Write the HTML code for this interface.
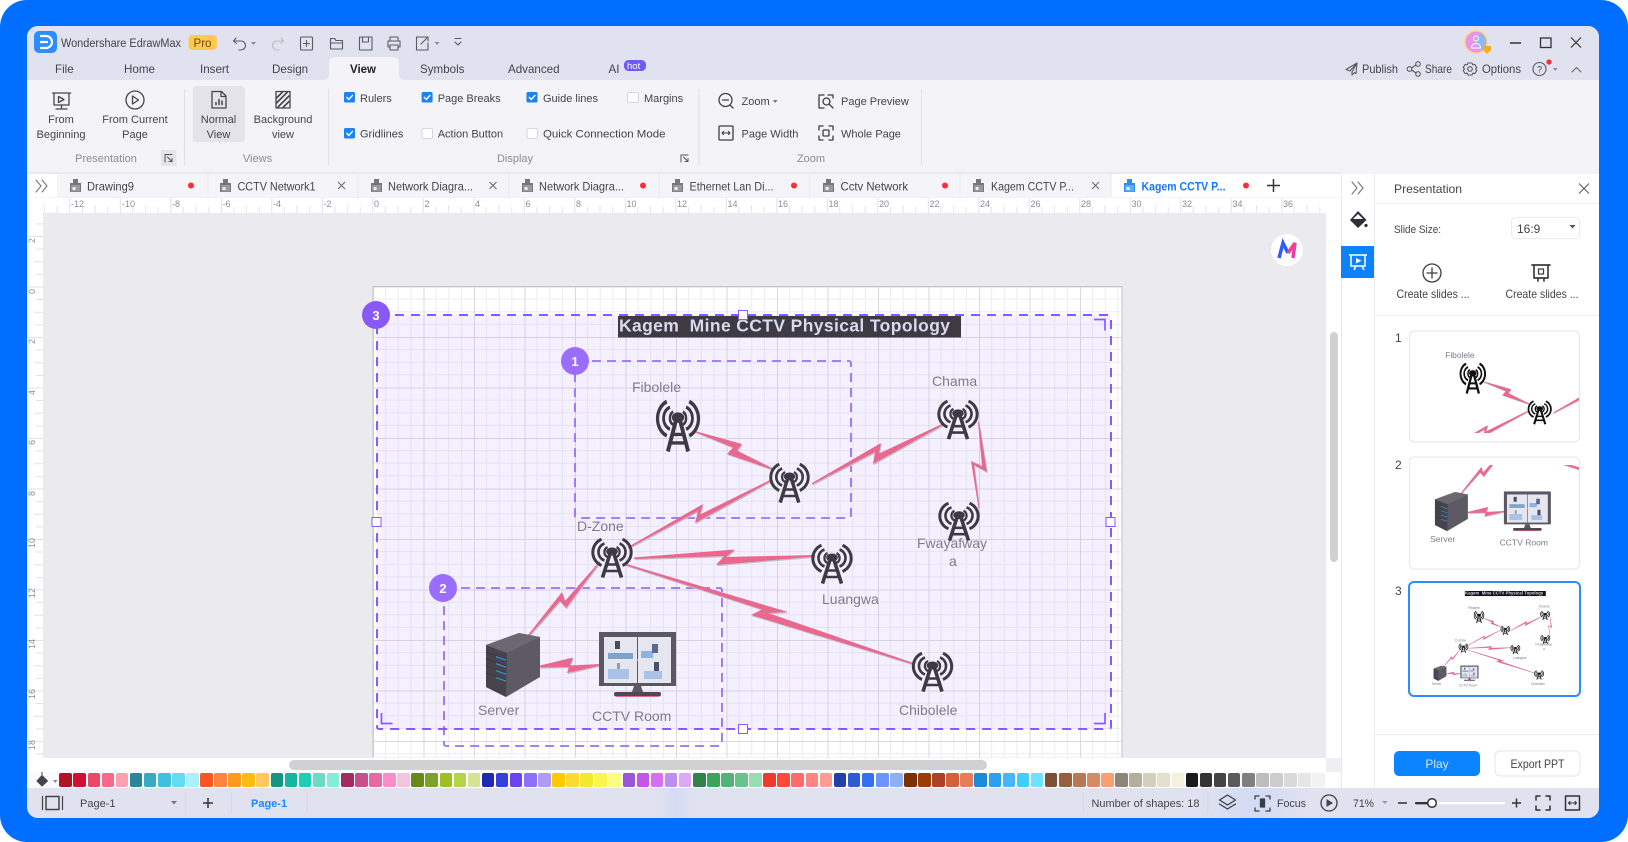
<!DOCTYPE html>
<html lang="en"><head><meta charset="utf-8"><title>Wondershare EdrawMax</title>
<style>
html,body{margin:0;padding:0;width:1628px;height:842px;overflow:hidden;background:#fff}
svg{position:absolute;left:0;top:0;display:block}
text{font-family:"Liberation Sans",sans-serif;font-size:11px;fill:#43434b}
.g{fill:#8b8b92}.l{font-size:14px;fill:#7f7b88}.r{font-size:9px;fill:#8d8d92}
.m{font-size:11.6px}.tb{font-size:12px}
.i{fill:none;stroke:#45454d;stroke-width:1.3;stroke-linecap:round;stroke-linejoin:round}
.t{fill:none;stroke:#5a5a62;stroke-width:1.1;stroke-linecap:round;stroke-linejoin:round}
.sw{position:absolute;left:59.4px;top:773px;display:flex}
.sw i{display:block;width:12.6px;height:14px;margin-right:1.49px;border-radius:2px}
</style></head><body>
<svg width="1628" height="842" viewBox="0 0 1628 842" xmlns="http://www.w3.org/2000/svg">
<defs>
<clipPath id="win"><rect x="27" y="26" width="1572" height="792" rx="11"/></clipPath>
<clipPath id="pg"><rect x="43" y="213" width="1283" height="544.5"/></clipPath>
<clipPath id="c1"><rect x="1410" y="332" width="169" height="101"/></clipPath>
<clipPath id="c2"><rect x="1410" y="465" width="169" height="103"/></clipPath>
<linearGradient id="gl" x1="0" x2="1" y1="0" y2="0"><stop offset="0" stop-color="#cfdaf6" stop-opacity="0"/><stop offset=".5" stop-color="#cfdaf6"/><stop offset="1" stop-color="#cfdaf6" stop-opacity="0"/></linearGradient>
<pattern id="gr" patternUnits="userSpaceOnUse" x="373" y="286.5" width="50.5" height="50.5">
<path d="M12.6 0V50.5M25.25 0V50.5M37.9 0V50.5M0 12.6H50.5M0 25.25H50.5M0 37.9H50.5" stroke="#cfcdd9" stroke-opacity=".38" stroke-width="1" fill="none"/>
<path d="M.5 0V50.5M0 .5H50.5" stroke="#c2c0cc" stroke-opacity=".6" stroke-width="1" fill="none"/>
</pattern>
<pattern id="rt" patternUnits="userSpaceOnUse" x="69.3" y="198" width="50.5" height="15">
<path d="M.5 0V15M13 9V15M25.7 7V15M38.4 9V15" stroke="#e2e2e6" fill="none"/>
</pattern>
<pattern id="rl" patternUnits="userSpaceOnUse" x="27" y="286.5" width="16" height="50.5">
<path d="M0 .5H16M9 13H16M7 25.7H16M9 38.4H16" stroke="#e2e2e6" fill="none"/>
</pattern>
<symbol id="tw" viewBox="0 0 44 40" preserveAspectRatio="none">
<g fill="none" stroke="currentColor" stroke-linecap="butt">
<path stroke-width="3" d="M11.5 1.2A14.3 14.3 0 0 0 11.5 27.5M32.5 1.2A14.3 14.3 0 0 1 32.5 27.5"/>
<path stroke-width="2.6" d="M14.500 5.500A9 9 0 0 0 14.500 22.500M29.500 5.500A9 9 0 0 1 29.500 22.500"/>
<path stroke-width="2.3" d="M17.500 9A5.600 5.600 0 0 0 17.500 19M26.500 9A5.600 5.600 0 0 1 26.500 19"/>
<path stroke-width="3.600" d="M20.300 15L12.500 39.600M23.700 15L31.500 39.600"/>
<path stroke-width="2.600" d="M17 26.500H27M15 33H29"/>
</g><ellipse cx="22" cy="13.500" rx="5.800" ry="4" fill="currentColor"/>
</symbol>
<symbol id="ti" viewBox="0 0 11 13"><path d="M3 0h5v4h3v9H0V4h3z" fill="#777"/><rect x="1" y="6" width="9" height="6.500" fill="#999"/><rect x="2.600" y="8" width="3" height="3" fill="#eee"/></symbol>
<symbol id="tia" viewBox="0 0 11 13"><path d="M3 0h5v4h3v9H0V4h3z" fill="#2f8cf0"/><rect x="1" y="6" width="9" height="6.500" fill="#5aaeff"/><rect x="2.600" y="8" width="3" height="3" fill="#e8f3ff"/></symbol>
<g id="bolts">
<polygon points="695,431 742,444 737,450.500 772,468 772,469.500 727,454 733,447.500 695,432"/>
<polygon points="628,547 703,504 700,514.500 772,479 772,480.500 695,523 698,511 628,548.500"/>
<polygon points="812,483 881,443 879,453.500 943,423.500 943,425 873,464 875,452 812,484.500"/>
<polygon points="979,422 987,472 974,465 979.500,508 978.500,508 971,461 982,466 978,422"/>
<polygon points="634,557.500 735,549.500 726,557 815,555 815,556.500 716,565 724,556 634,559"/>
<polygon points="625,563.500 788,612 768,613 912,662.500 912,664 751,615 762,609.500 625,565"/>
<polygon points="528,635 562,592 565,601 600,561 600,562.500 566,608 560,601 529,636"/>
<polygon points="540,665.500 573,657.500 570,665.500 600,664 600,665.500 567,673 569,667 540,667.500"/>
</g>
<g id="d">
<use href="#bolts" transform="translate(.8 1.2)" fill="#c6c2cd"/>
<use href="#bolts" fill="#e9688f"/>
<use href="#tw" x="654.500" y="400" width="47" height="52"/>
<use href="#tw" x="768" y="463" width="43" height="40"/>
<use href="#tw" x="936" y="400" width="44" height="39.500"/>
<use href="#tw" x="937" y="502" width="44" height="39"/>
<use href="#tw" x="590" y="538" width="44" height="40"/>
<use href="#tw" x="810" y="544" width="44" height="40"/>
<use href="#tw" x="910.500" y="652" width="44" height="40"/>
<polygon points="519,633 540,637 540,677 506,697 486,687 486,645" fill="#5e5a64"/>
<polygon points="486,645 507,653 506,697 486,687" fill="#46434c"/>
<polygon points="519,633 540,637 507,653 486,645" fill="#6c6872"/>
<g stroke="#2d9be0" stroke-width="1.400"><path d="M496 656.500L506 660M496 663.500L506 667M496 670.500L506 674M496 677.500L506 681"/></g>
<g stroke="#38343d" stroke-width=".7"><path d="M486 652L506 659M486 659L506 666M486 666L506 673M486 673L506 680"/></g>
<rect x="599" y="632" width="77" height="54" fill="#5b5862"/>
<rect x="604" y="637" width="67" height="46" fill="#e6e6f0"/>
<path d="M637.500 637V683" stroke="#5b5862" stroke-width="1"/>
<path d="M604 660H671" stroke="#e6e6f0"/>
<rect x="608" y="653" width="25" height="6" fill="#7fa3c9"/><rect x="615" y="641" width="5" height="8" fill="#4a4a58"/><rect x="641" y="651" width="12" height="7" fill="#8fb3e0"/><rect x="652" y="644" width="6" height="9" fill="#5b6a8c"/>
<rect x="608" y="669" width="21" height="10" fill="#a8c3e6"/><rect x="617" y="663" width="3" height="6" fill="#9a9aa6"/><rect x="644" y="671" width="18" height="8" fill="#a8c3e6"/><rect x="654" y="662" width="5" height="9" fill="#4a5068"/>
<path d="M634 686h7l2 6h-11z" fill="#5b5862"/><rect x="614" y="692" width="47" height="4.400" rx="2" fill="#4c4952"/><rect x="616" y="696" width="43" height="1" fill="#e9688f"/>
<text class="l" x="632" y="392">Fibolele</text>
<text class="l" x="932" y="386">Chama</text>
<text class="l" x="577" y="531">D-Zone</text>
<text class="l" x="917" y="548">Fwayafway</text>
<text class="l" x="949" y="566">a</text>
<text class="l" x="822" y="604">Luangwa</text>
<text class="l" x="899" y="715">Chibolele</text>
<text class="l" x="478" y="715">Server</text>
<text class="l" x="592" y="721">CCTV Room</text>
</g>
<g id="t"><rect x="618" y="316" width="343" height="21.500" fill="currentColor"/><text x="619" y="331.700" textLength="331" style="font-size:17.500px;font-weight:700;fill:#d8daee">Kagem&#160; Mine CCTV Physical Topology</text></g>
</defs>

<rect width="1628" height="842" fill="#fff"/>
<rect width="1628" height="842" rx="27" fill="#006eff"/>
<g clip-path="url(#win)">
<rect x="27" y="26" width="1572" height="792" fill="#f3f3f8"/>
<rect x="27" y="26" width="1572" height="54" fill="#e1e2ef"/>

<!-- title row -->
<rect x="34" y="31" width="23" height="22" rx="5" fill="#2b8dff"/>
<path d="M40 36h6a6 6 0 0 1 0 12h-6M40 42h8" fill="none" stroke="#fff" stroke-width="2.200"/>
<text x="61" y="47" style="font-size:11.500px" textLength="120" lengthAdjust="spacingAndGlyphs">Wondershare EdrawMax</text>
<rect x="188.500" y="35" width="28.500" height="15" rx="4" fill="#ffc94f"/>
<text x="193.500" y="47" style="font-size:12px;fill:#6a4d0a" textLength="18" lengthAdjust="spacingAndGlyphs">Pro</text>
<path class="t" d="M236 38l-2.500 3 3 2.500M234 41h7a4.500 4.500 0 0 1 0 9h-2"/>
<path d="M251 42h5l-2.500 3z" fill="#8a8a92"/>
<path class="t" style="stroke:#b9b9c1" d="M281 38l2.500 3-3 2.500M283 41h-6a4.500 4.500 0 0 0 0 9h2"/>
<rect class="t" x="300.500" y="37" width="12" height="13" rx="1"/><path class="t" d="M306.500 40.500v6M303.500 43.500h6"/>
<path class="t" d="M330.500 49V38.500h4l1.500 2h6.500V49zM330.500 43h12"/>
<path class="t" d="M359.500 37h12.500v13h-12.500zM362.500 37v5h6v-5"/>
<path class="t" d="M390 41v-4h8v4M388 41h12v6h-2M388 47h2M388 41v6M390 45h8v5h-8z"/>
<path class="t" d="M428 43v7h-11.500V37h7M421 44l7-7M424 37h4v4"/>
<path d="M434.500 42h5l-2.500 3z" fill="#8a8a92"/>
<path class="t" d="M455 38.500h6M455 42l3 3 3-3"/>

<!-- tabs -->
<path d="M323 80q5.500 0 6-5V63q0-6 6-6h58q6 0 6 6v12q.5 5 6 5z" fill="#f3f3f8"/>
<text class="m" x="55" y="73">File</text><text class="m" x="124" y="73">Home</text><text class="m" x="200" y="73">Insert</text><text class="m" x="272" y="73">Design</text>
<text class="m" x="350" y="73" style="font-weight:700;fill:#222" textLength="26" lengthAdjust="spacingAndGlyphs">View</text>
<text class="m" x="420" y="73">Symbols</text><text class="m" x="508" y="73">Advanced</text><text class="m" x="608.500" y="73">AI</text>
<rect x="624" y="60" width="22" height="11" rx="4.500" fill="#6c5cf5"/><text x="627" y="69" style="font-size:9.500px;fill:#fff">hot</text>

<!-- win controls -->
<circle cx="1476" cy="42" r="12" fill="#ffd98a"/><circle cx="1476" cy="42" r="10.500" fill="#e895e8"/><path d="M1476 42a10.500 10.500 0 0 1 5-9 10.500 10.500 0 0 1 0 18z" fill="#8fb8f5"/>
<circle cx="1476" cy="38.500" r="2.500" fill="none" stroke="#fff"/><path d="M1471.500 48c0-6 9-6 9 0z" fill="none" stroke="#fff"/>
<path d="M1483 46h8v4l-4 4-4-4z" fill="#f7ad1a"/>
<path d="M1510 43h11" stroke="#333" stroke-width="1.400"/>
<rect x="1540.500" y="38" width="10.500" height="9.500" fill="none" stroke="#333" stroke-width="1.300"/>
<path d="M1571 37.500l10 10M1581 37.500l-10 10" stroke="#333" stroke-width="1.200"/>
<path class="t" d="M1357 63l-11 6.500 4 1.500 7-8-5 9v3l2.500-2.500 1.500 1z"/><text x="1362" y="73" class="m" textLength="36" lengthAdjust="spacingAndGlyphs">Publish</text>
<g class="t"><circle cx="1418" cy="64" r="2.300"/><circle cx="1409.500" cy="69" r="2.300"/><circle cx="1418" cy="74" r="2.300"/><path d="M1411.500 68l4.500-3M1411.500 70l4.500 3"/></g><text x="1425" y="73" class="m" textLength="27" lengthAdjust="spacingAndGlyphs">Share</text>
<g class="t"><circle cx="1470" cy="69" r="2.300"/><path d="M1468 63h4l.8 1.800 2-.4 2 3-1.300 1.600 1.300 1.600-2 3-2-.4-.8 1.800h-4l-.8-1.800-2 .4-2-3 1.300-1.600-1.300-1.600 2-3 2 .4z"/></g><text x="1482" y="73" class="m" textLength="39" lengthAdjust="spacingAndGlyphs">Options</text>
<circle class="t" cx="1539.500" cy="69" r="6.500"/><text x="1537" y="72.500" style="font-size:9px">?</text><circle cx="1549" cy="62" r="2.600" fill="#ff2d2d"/><path d="M1553 68h4.500l-2.200 3z" fill="#8a8a92"/>
<path class="t" style="stroke:#666" d="M1572 72l4.500-4.500L1581 72"/>

<!-- ribbon -->
<g class="i">
<path d="M52.700 93h18M54 93v12h15V93M61.500 105v4M56 109h11"/><path d="M58.500 96.500l5.500 3-5.500 3z"/>
<circle cx="135" cy="100" r="9"/><path d="M132.500 96l6 4-6 4z"/>
</g>
<rect x="192.600" y="86" width="52.400" height="56" rx="4" fill="#e3e3e9"/>
<g class="i"><path d="M212 91.500h9.500l4.500 4.500v12h-14zM221 92v4.500h4.500"/><path d="M216 104.500v-2M219 104.500v-5M222 104.500v-3.500" stroke-width="1.500"/>
<rect x="276" y="91.500" width="14" height="16.500"/><path d="M276.500 98l6-6M276.500 103l11-11M278 107l11-11M283 107.500l6-6" stroke-width="1.700"/></g>
<g text-anchor="middle"><text x="61" y="123">From</text><text x="61" y="138">Beginning</text><text x="135" y="123">From Current</text><text x="135" y="138">Page</text><text x="218.500" y="123">Normal</text><text x="218.500" y="138">View</text><text x="283" y="123">Background</text><text x="283" y="138">view</text>
<text class="g" x="106" y="162">Presentation</text><text class="g" x="257.500" y="162">Views</text><text class="g" x="515" y="162">Display</text><text class="g" x="811" y="162">Zoom</text></g>
<rect x="161" y="150" width="15.500" height="16" rx="1" fill="#e4e4ea"/><path class="i" style="stroke-width:1;stroke:#555" d="M165 162v-7.500h7M167.500 157l4.500 4.500M172 158.500v3h-3"/>
<path class="i" style="stroke-width:1;stroke:#555" d="M681 162v-7h7M683.500 157l4.500 4.500M688 158.500v3h-3"/>
<path d="M184.500 89V165M328.700 89V165M699 89V165M921.500 89V165" stroke="#dfdfe5"/>
<g>
<rect x="344" y="92" width="11" height="10.500" rx="1.500" fill="#1c83f0"/><path d="M346.500 97l2.300 2.500 4-4.500" fill="none" stroke="#fff" stroke-width="1.400"/>
<rect x="344" y="128" width="11" height="10.500" rx="1.500" fill="#1c83f0"/><path d="M346.500 133l2.300 2.500 4-4.500" fill="none" stroke="#fff" stroke-width="1.400"/>
<rect x="421.600" y="92" width="11" height="10.500" rx="1.500" fill="#1c83f0"/><path d="M424 97l2.300 2.500 4-4.500" fill="none" stroke="#fff" stroke-width="1.400"/>
<rect x="526.500" y="92" width="11" height="10.500" rx="1.500" fill="#1c83f0"/><path d="M529 97l2.300 2.500 4-4.500" fill="none" stroke="#fff" stroke-width="1.400"/>
<rect x="627.500" y="92.500" width="11" height="10" rx="1.500" fill="#fff" stroke="#d6d6dc"/>
<rect x="422" y="128.500" width="10.500" height="10" rx="1.500" fill="#fff" stroke="#d6d6dc"/>
<rect x="527" y="128.500" width="10.500" height="10" rx="1.500" fill="#fff" stroke="#d6d6dc"/>
</g>
<text x="360" y="102">Rulers</text><text x="360" y="137.500">Gridlines</text><text x="437.700" y="102">Page Breaks</text><text x="437.700" y="137.500">Action Button</text><text x="543" y="102">Guide lines</text><text x="543" y="137.500" textLength="122.500" lengthAdjust="spacingAndGlyphs">Quick Connection Mode</text><text x="644" y="102">Margins</text>
<g class="i" style="stroke:#3d3d45"><circle cx="725.500" cy="100" r="6.500"/><path d="M722.500 100h6M730 105l3 3"/>
<rect x="719" y="126" width="14" height="14" rx="1"/><path d="M722 133h8M723.500 131.500l-1.500 1.500 1.500 1.500M728.500 131.500l1.500 1.500-1.500 1.500" stroke-width="1.100"/>
<path d="M824 95h-5v13h5M828 95h5v3"/><circle cx="826.500" cy="101.500" r="3.500"/><path d="M829 104l4 4"/>
<path d="M823 126h-4v4M829 126h4v4M833 136v4h-4M823 140h-4v-4"/><rect x="823" y="130" width="6" height="6" rx="1"/></g>
<text x="741.500" y="105">Zoom</text><path d="M773 100h4.500l-2.200 3z" fill="#777"/><text x="741.500" y="137.500">Page Width</text><text x="841" y="105">Page Preview</text><text x="841" y="137.500">Whole Page</text>

<!-- tab strip -->
<rect x="27" y="172" width="1314" height="2" fill="#e9e9ef"/>
<rect x="27" y="174" width="1314" height="23.500" fill="#f5f5f9"/>
<rect x="27" y="174" width="30" height="23.500" fill="#fff"/>
<rect x="1111" y="174" width="230" height="23.500" fill="#fff"/>
<rect x="27" y="197.500" width="1314" height="1" fill="#ececf1"/>
<path class="t" style="stroke:#777" d="M36 180l5 6-5 6M42 180l5 6-5 6"/>
<path d="M208 174v23M358 174v23M509 174v23M659 174v23M809.500 174v23M960 174v23M1111 174v23" stroke="#e8e8ed"/>
<use href="#ti" x="70" y="179" width="11" height="13"/><use href="#ti" x="220" y="179" width="11" height="13"/><use href="#ti" x="371" y="179" width="11" height="13"/><use href="#ti" x="522" y="179" width="11" height="13"/><use href="#ti" x="672" y="179" width="11" height="13"/><use href="#ti" x="823" y="179" width="11" height="13"/><use href="#ti" x="973" y="179" width="11" height="13"/><use href="#tia" x="1124" y="179" width="11" height="13"/>
<text class="tb" x="87" y="190.500" textLength="47" lengthAdjust="spacingAndGlyphs">Drawing9</text><text class="tb" x="237.500" y="190.500" textLength="78" lengthAdjust="spacingAndGlyphs">CCTV Network1</text><text class="tb" x="388" y="190.500" textLength="85" lengthAdjust="spacingAndGlyphs">Network Diagra...</text><text class="tb" x="539" y="190.500" textLength="85" lengthAdjust="spacingAndGlyphs">Network Diagra...</text><text class="tb" x="689.500" y="190.500" textLength="84" lengthAdjust="spacingAndGlyphs">Ethernet Lan Di...</text><text class="tb" x="840.500" y="190.500" textLength="67.500" lengthAdjust="spacingAndGlyphs">Cctv Network</text><text class="tb" x="991" y="190.500" textLength="83" lengthAdjust="spacingAndGlyphs">Kagem CCTV P...</text><text class="tb" x="1141.500" y="190.500" textLength="84" lengthAdjust="spacingAndGlyphs" style="fill:#1677ff;font-weight:700">Kagem CCTV P...</text>
<circle cx="191" cy="185.500" r="3" fill="#ff2d3a"/><circle cx="643" cy="185.500" r="3" fill="#ff2d3a"/><circle cx="794" cy="185.500" r="3" fill="#ff2d3a"/><circle cx="945" cy="185.500" r="3" fill="#ff2d3a"/><circle cx="1246" cy="185.500" r="3" fill="#ff2d3a"/>
<path d="M338 182l7 7M345 182l-7 7M489.500 182l7 7M496.500 182l-7 7M1092 182l7 7M1099 182l-7 7" stroke="#666" stroke-width="1"/>
<path d="M1273.500 179v13M1267 185.500h13" stroke="#333" stroke-width="1.500"/>

<!-- rulers -->
<rect x="27" y="198" width="1299" height="15" fill="#fff"/><rect x="27" y="213" width="16" height="545" fill="#fff"/>
<rect x="43" y="198" width="1283" height="15" fill="url(#rt)"/><rect x="27" y="213" width="16" height="545" fill="url(#rl)"/>
<text class="r" x="71" y="207">-12</text><text class="r" x="122" y="207">-10</text><text class="r" x="172" y="207">-8</text><text class="r" x="222.500" y="207">-6</text><text class="r" x="273" y="207">-4</text><text class="r" x="323.500" y="207">-2</text><text class="r" x="374" y="207">0</text><text class="r" x="424.500" y="207">2</text><text class="r" x="475" y="207">4</text><text class="r" x="525.500" y="207">6</text><text class="r" x="576" y="207">8</text><text class="r" x="626.500" y="207">10</text><text class="r" x="677" y="207">12</text><text class="r" x="727.500" y="207">14</text><text class="r" x="778" y="207">16</text><text class="r" x="828.500" y="207">18</text><text class="r" x="879" y="207">20</text><text class="r" x="929.500" y="207">22</text><text class="r" x="980" y="207">24</text><text class="r" x="1030.500" y="207">26</text><text class="r" x="1081" y="207">28</text><text class="r" x="1131.500" y="207">30</text><text class="r" x="1182" y="207">32</text><text class="r" x="1232.500" y="207">34</text><text class="r" x="1283" y="207">36</text>
<text class="r" transform="translate(35 243) rotate(-90)">2</text><text class="r" transform="translate(35 294) rotate(-90)">0</text><text class="r" transform="translate(35 344) rotate(-90)">2</text><text class="r" transform="translate(35 395) rotate(-90)">4</text><text class="r" transform="translate(35 445) rotate(-90)">6</text><text class="r" transform="translate(35 496) rotate(-90)">8</text><text class="r" transform="translate(35 548) rotate(-90)">10</text><text class="r" transform="translate(35 598) rotate(-90)">12</text><text class="r" transform="translate(35 649) rotate(-90)">14</text><text class="r" transform="translate(35 699) rotate(-90)">16</text><text class="r" transform="translate(35 750) rotate(-90)">18</text>

<!-- canvas -->
<rect x="43" y="213" width="1283" height="545" fill="#eaeaef"/>
<g clip-path="url(#pg)" style="color:#3d3a44">
<rect x="373" y="286.500" width="749" height="475" fill="#fff" stroke="#c4c4c8"/>
<rect x="377" y="315" width="734" height="414" fill="#f4f0ff"/>
<rect x="373" y="286.500" width="749" height="475" fill="url(#gr)"/>
<rect x="575" y="361" width="276" height="157" rx="2" fill="none" stroke="#9a6dff" stroke-width="1.800" stroke-dasharray="9 6"/>
<rect x="444" y="588" width="278" height="158" rx="2" fill="none" stroke="#9a6dff" stroke-width="1.800" stroke-dasharray="9 6"/>
<use href="#t"/>
<rect x="377" y="315" width="734" height="414" rx="2" fill="none" stroke="#8a58ff" stroke-width="2" stroke-dasharray="9 7"/>
<use href="#d"/>
<path d="M1094 319.500h11v11M381.500 713v10.500h11M1105 713v10.500h-11" fill="none" stroke="#8a58ff" stroke-width="1.700"/>
<g fill="#fff" stroke="#8a58ff"><rect x="738.500" y="310.500" width="9" height="9"/><rect x="372" y="517.500" width="9" height="9"/><rect x="1106" y="517.500" width="9" height="9"/><rect x="738.500" y="724.500" width="9" height="9"/></g>
<circle cx="376" cy="315" r="14" fill="#8a58f6"/><circle cx="575" cy="361" r="14" fill="#9a6dff"/><circle cx="443" cy="588" r="14" fill="#9a6dff"/>
<g text-anchor="middle"><text x="376" y="320" style="font-size:13px;font-weight:700;fill:#fff">3</text><text x="575" y="366" style="font-size:13px;font-weight:700;fill:#fff">1</text><text x="443" y="593" style="font-size:13px;font-weight:700;fill:#fff">2</text></g>
</g>
<circle cx="1287" cy="250" r="16" fill="#fff"/><path d="M1279 258l4-15 5 10" fill="none" stroke="#2a5cff" stroke-width="3.500"/><path d="M1288 253l7-10-2 15" fill="none" stroke="#ef3d9a" stroke-width="3.500"/>

<!-- scrollbars -->
<rect x="27" y="758" width="1299" height="14" fill="#fff"/>
<rect x="289" y="760" width="698" height="10" rx="5" fill="#d1d1d3"/>
<rect x="1326" y="198" width="15" height="560" fill="#fff"/><rect x="1326" y="758" width="15" height="14" fill="#eeeef3"/>
<rect x="1330" y="332" width="8" height="230" rx="4" fill="#d1d1d3"/>
<rect x="27" y="772" width="1314" height="16" fill="#fbfbfd"/>
<path d="M42 786l-5-5 5-5.500 5.500 5.500zM42 775v-3" fill="#45454d" stroke="#45454d"/><path d="M53 780h4.500l-2.200 3z" fill="#888"/>

<!-- right column -->
<rect x="1341" y="174" width="258" height="614" fill="#fff"/>
<path d="M1341.500 174V788M1374.500 174V788" stroke="#e9e9ee"/>
<path class="t" style="stroke:#777" d="M1352 182l5 6-5 6M1358 182l5 6-5 6"/>
<path d="M1350 220l8-9 8.500 9-8.500 8z" fill="#2e2e36"/><path d="M1353 219h10l-5-5z" fill="#fff"/><circle cx="1366" cy="225.500" r="1.600" fill="#2e2e36"/>
<rect x="1341" y="246" width="33" height="32" fill="#0d82ff"/>
<path d="M1349 255h18M1351 255v11h14v-11M1354 270l2-4M1362 266l2 4" fill="none" stroke="#fff" stroke-width="1.500"/><path d="M1356 258l5.500 2.700-5.500 2.800z" fill="#fff"/>
<text x="1394" y="193" class="tb" textLength="68" lengthAdjust="spacingAndGlyphs">Presentation</text>
<path d="M1579 183.500l10 10M1589 183.500l-10 10" stroke="#555" stroke-width="1"/>
<path d="M1375 203.500H1599M1375 315.500H1599M1375 734.500H1599" stroke="#ececf0"/>
<text x="1394" y="233" textLength="47" lengthAdjust="spacingAndGlyphs">Slide Size:</text>
<rect x="1511.500" y="217.500" width="68" height="21" rx="4" fill="#fff" stroke="#ececf0"/><text x="1517" y="233" class="tb">16:9</text><path d="M1569.500 225h6l-3 3.500z" fill="#555"/>
<g class="i" style="stroke:#3d3d45"><circle cx="1432" cy="273" r="9"/><path d="M1427 273h10M1432 268v10"/>
<path d="M1532 265h18M1534 265v13h14v-13M1538 278v3M1544 278v3" stroke-width="1.700"/><rect x="1538.500" y="269" width="5" height="5"/></g>
<text x="1433" y="298" text-anchor="middle" class="tb" textLength="73" lengthAdjust="spacingAndGlyphs">Create slides ...</text>
<text x="1542" y="298" text-anchor="middle" class="tb" textLength="73" lengthAdjust="spacingAndGlyphs">Create slides ...</text>
<text x="1395" y="342" class="tb">1</text><text x="1395" y="469" class="tb">2</text><text x="1395" y="595" class="tb">3</text>
<rect x="1409.500" y="331" width="170" height="111" rx="5" fill="#fff" stroke="#e6e6ea"/>
<rect x="1409.500" y="457" width="170" height="112" rx="5" fill="#fff" stroke="#e6e6ea"/>
<rect x="1409" y="582" width="171" height="114" rx="5" fill="#fff" stroke="#2a8cff" stroke-width="2"/>
<g style="color:#111" clip-path="url(#c1)"><use href="#d" transform="translate(1066 122.700) scale(.6)"/></g>
<g style="color:#111" clip-path="url(#c2)"><use href="#d" transform="translate(1138.500 105.900) scale(.61)"/></g>
<g style="color:#111"><use href="#t" transform="translate(1319 516.400) scale(.236)"/><use href="#d" transform="translate(1319 516.400) scale(.236)"/></g>
<rect x="1394" y="751" width="86" height="25" rx="5" fill="#0a84ff"/><text x="1437" y="768" text-anchor="middle" class="tb" style="fill:#cfe6ff">Play</text>
<rect x="1495" y="751" width="85" height="25" rx="5" fill="#fff" stroke="#e6e6ea"/><text x="1537.500" y="768" text-anchor="middle" class="tb" textLength="54" lengthAdjust="spacingAndGlyphs">Export PPT</text>

<!-- status -->
<rect x="27" y="788" width="1572" height="30" fill="#e1e2ef"/>
<rect x="655" y="788" width="44" height="30" fill="url(#gl)" opacity=".7"/><rect x="1190" y="788" width="125" height="30" fill="url(#gl)" opacity=".8"/>
<path d="M42.500 796v14M62.500 796v14" stroke="#444" stroke-width="1.200"/><rect x="46" y="796.500" width="13" height="13" fill="none" stroke="#444" stroke-width="1.500"/>
<text x="80" y="807">Page-1</text><path d="M171 801h6l-3 3.500z" fill="#777"/>
<path d="M185.500 792v21M231.500 792v21M307 792v21M1083.500 792v21M1208 792v21" stroke="#d5d6e3"/>
<path d="M208 798v10M203 803h10" stroke="#333" stroke-width="1.500"/>
<text x="251" y="807" style="fill:#1a86ff;font-weight:700">Page-1</text>
<text x="1091.500" y="807" textLength="108" lengthAdjust="spacingAndGlyphs">Number of shapes: 18</text>
<g class="i" style="stroke:#3d3d45"><path d="M1227.500 795l8 5-8 5-8-5zM1219.500 804l8 5 8-5"/>
<path d="M1255 799v-3h4M1266 796h4v3M1270 808v3h-4M1259 811h-4v-3"/><rect x="1260.500" y="799" width="4" height="8" fill="#3d3d45"/>
<circle cx="1329" cy="803" r="8"/></g><path d="M1326.500 799l6.500 4-6.500 4z" fill="#45454d"/>
<text x="1277" y="807" textLength="29" lengthAdjust="spacingAndGlyphs">Focus</text><text x="1353" y="807" textLength="21" lengthAdjust="spacingAndGlyphs">71%</text><path d="M1382 801h5.500l-2.700 3z" fill="#999"/>
<path d="M1398 803h9M1512 803h9M1516.500 798.500v9" stroke="#333" stroke-width="1.500"/>
<rect x="1415" y="802" width="90" height="2.400" rx="1" fill="#fff"/><rect x="1415" y="802" width="17" height="2.400" rx="1" fill="#333"/><circle cx="1432" cy="803" r="4.300" fill="#fff" stroke="#333" stroke-width="1.500"/>
<g class="i" style="stroke:#333;stroke-width:1.500"><path d="M1536 800v-4h4M1546 796h4v4M1550 806v4h-4M1540 810h-4v-4"/><rect x="1565.500" y="796" width="14" height="14"/><path d="M1568.500 803h8M1570 801.500l-1.500 1.500 1.500 1.500M1575 801.500l1.500 1.500-1.500 1.500" stroke-width="1.100"/></g>
</g>
</svg>
<div class="sw">
<i style="background:#b01324"></i><i style="background:#cf0f33"></i><i style="background:#ec4766"></i><i style="background:#fa6a88"></i><i style="background:#fca0b0"></i>
<i style="background:#2b8499"></i><i style="background:#38abc3"></i><i style="background:#3fc1de"></i><i style="background:#63dcef"></i><i style="background:#aaf0fd"></i>
<i style="background:#fa5423"></i><i style="background:#ff8240"></i><i style="background:#ff9a1f"></i><i style="background:#ffbc14"></i><i style="background:#ffc85c"></i>
<i style="background:#149782"></i><i style="background:#15b69f"></i><i style="background:#1ccfb4"></i><i style="background:#6cdac5"></i><i style="background:#85ecdc"></i>
<i style="background:#a42a62"></i><i style="background:#c94f8c"></i><i style="background:#e868a6"></i><i style="background:#fb8bc9"></i><i style="background:#f4c4de"></i>
<i style="background:#658a15"></i><i style="background:#7ba32a"></i><i style="background:#9cbf22"></i><i style="background:#b4d349"></i><i style="background:#d5e392"></i>
<i style="background:#2029b0"></i><i style="background:#3540dc"></i><i style="background:#6b43f0"></i><i style="background:#8f70fb"></i><i style="background:#ad9bf7"></i>
<i style="background:#ffc900"></i><i style="background:#ffd930"></i><i style="background:#f3e92c"></i><i style="background:#f9f54f"></i><i style="background:#fbfc80"></i>
<i style="background:#9a55dc"></i><i style="background:#c455e8"></i><i style="background:#d96ef2"></i><i style="background:#bf8cf5"></i><i style="background:#dba8f7"></i>
<i style="background:#2f8248"></i><i style="background:#3ba35a"></i><i style="background:#55b07a"></i><i style="background:#68c28c"></i><i style="background:#98dcaf"></i>
<i style="background:#ee3a2c"></i><i style="background:#ff4a3a"></i><i style="background:#ff6b6b"></i><i style="background:#ff8582"></i><i style="background:#ff9b93"></i>
<i style="background:#2340a8"></i><i style="background:#2f5ad6"></i><i style="background:#3570f0"></i><i style="background:#6b94ff"></i><i style="background:#8bb0f5"></i>
<i style="background:#7a3000"></i><i style="background:#993d00"></i><i style="background:#aa4224"></i><i style="background:#d2603c"></i><i style="background:#e67c5a"></i>
<i style="background:#1a8bd8"></i><i style="background:#2aa0f2"></i><i style="background:#47b4ff"></i><i style="background:#3dcfff"></i><i style="background:#6ee1ff"></i>
<i style="background:#7c5034"></i><i style="background:#96603f"></i><i style="background:#b47955"></i><i style="background:#d68c62"></i><i style="background:#f7a071"></i>
<i style="background:#8e8578"></i><i style="background:#b3ae9a"></i><i style="background:#d2d0b9"></i><i style="background:#e5e0ce"></i><i style="background:#f5f1e0"></i>
<i style="background:#1a1a1a"></i><i style="background:#333"></i><i style="background:#444"></i><i style="background:#5a5a5a"></i><i style="background:#808080"></i>
<i style="background:#bdbdbd"></i><i style="background:#ccc"></i><i style="background:#d9d9d9"></i><i style="background:#e6e6e6"></i><i style="background:#f2f2f2"></i>
<i style="background:#fff"></i>
</div>
</body></html>
